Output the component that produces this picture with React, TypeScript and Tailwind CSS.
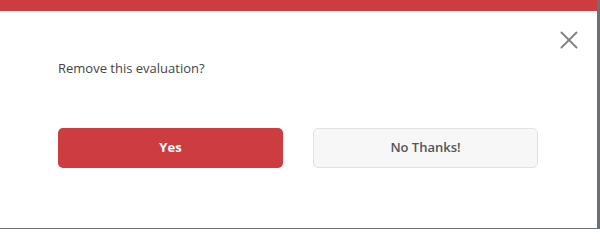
import { X } from "lucide-react"

export default function App() {
  return (
    <div className="w-[600px] h-[229px] bg-[#6d7073] overflow-hidden">
      <div
        className="relative w-[597px] h-[228px] bg-white"
        style={{ fontFamily: '"Open Sans", "Liberation Sans", sans-serif' }}
      >
        <div className="h-[11px] bg-[#cd3d3f]" />

        <button className="absolute right-[13px] top-[25px] text-[#858585]">
          <X className="h-[30px] w-[30px]" strokeWidth={1.6} />
        </button>

        <div className="px-[58px] pt-[47px]">
          <p className="text-[13px] leading-5 text-[#444]">
            Remove this evaluation?
          </p>

          <div className="mt-[50px] flex gap-[30px]">
            <button className="h-[40px] w-[225px] rounded-[5px] bg-[#cd3d3f] text-[13px] font-bold text-white">
              Yes
            </button>
            <button className="h-[40px] w-[225px] rounded-[5px] border border-[#e2e2e2] bg-[#f7f7f7] text-[13px] font-semibold text-[#555]">
              No Thanks!
            </button>
          </div>
        </div>
      </div>
    </div>
  )
}
